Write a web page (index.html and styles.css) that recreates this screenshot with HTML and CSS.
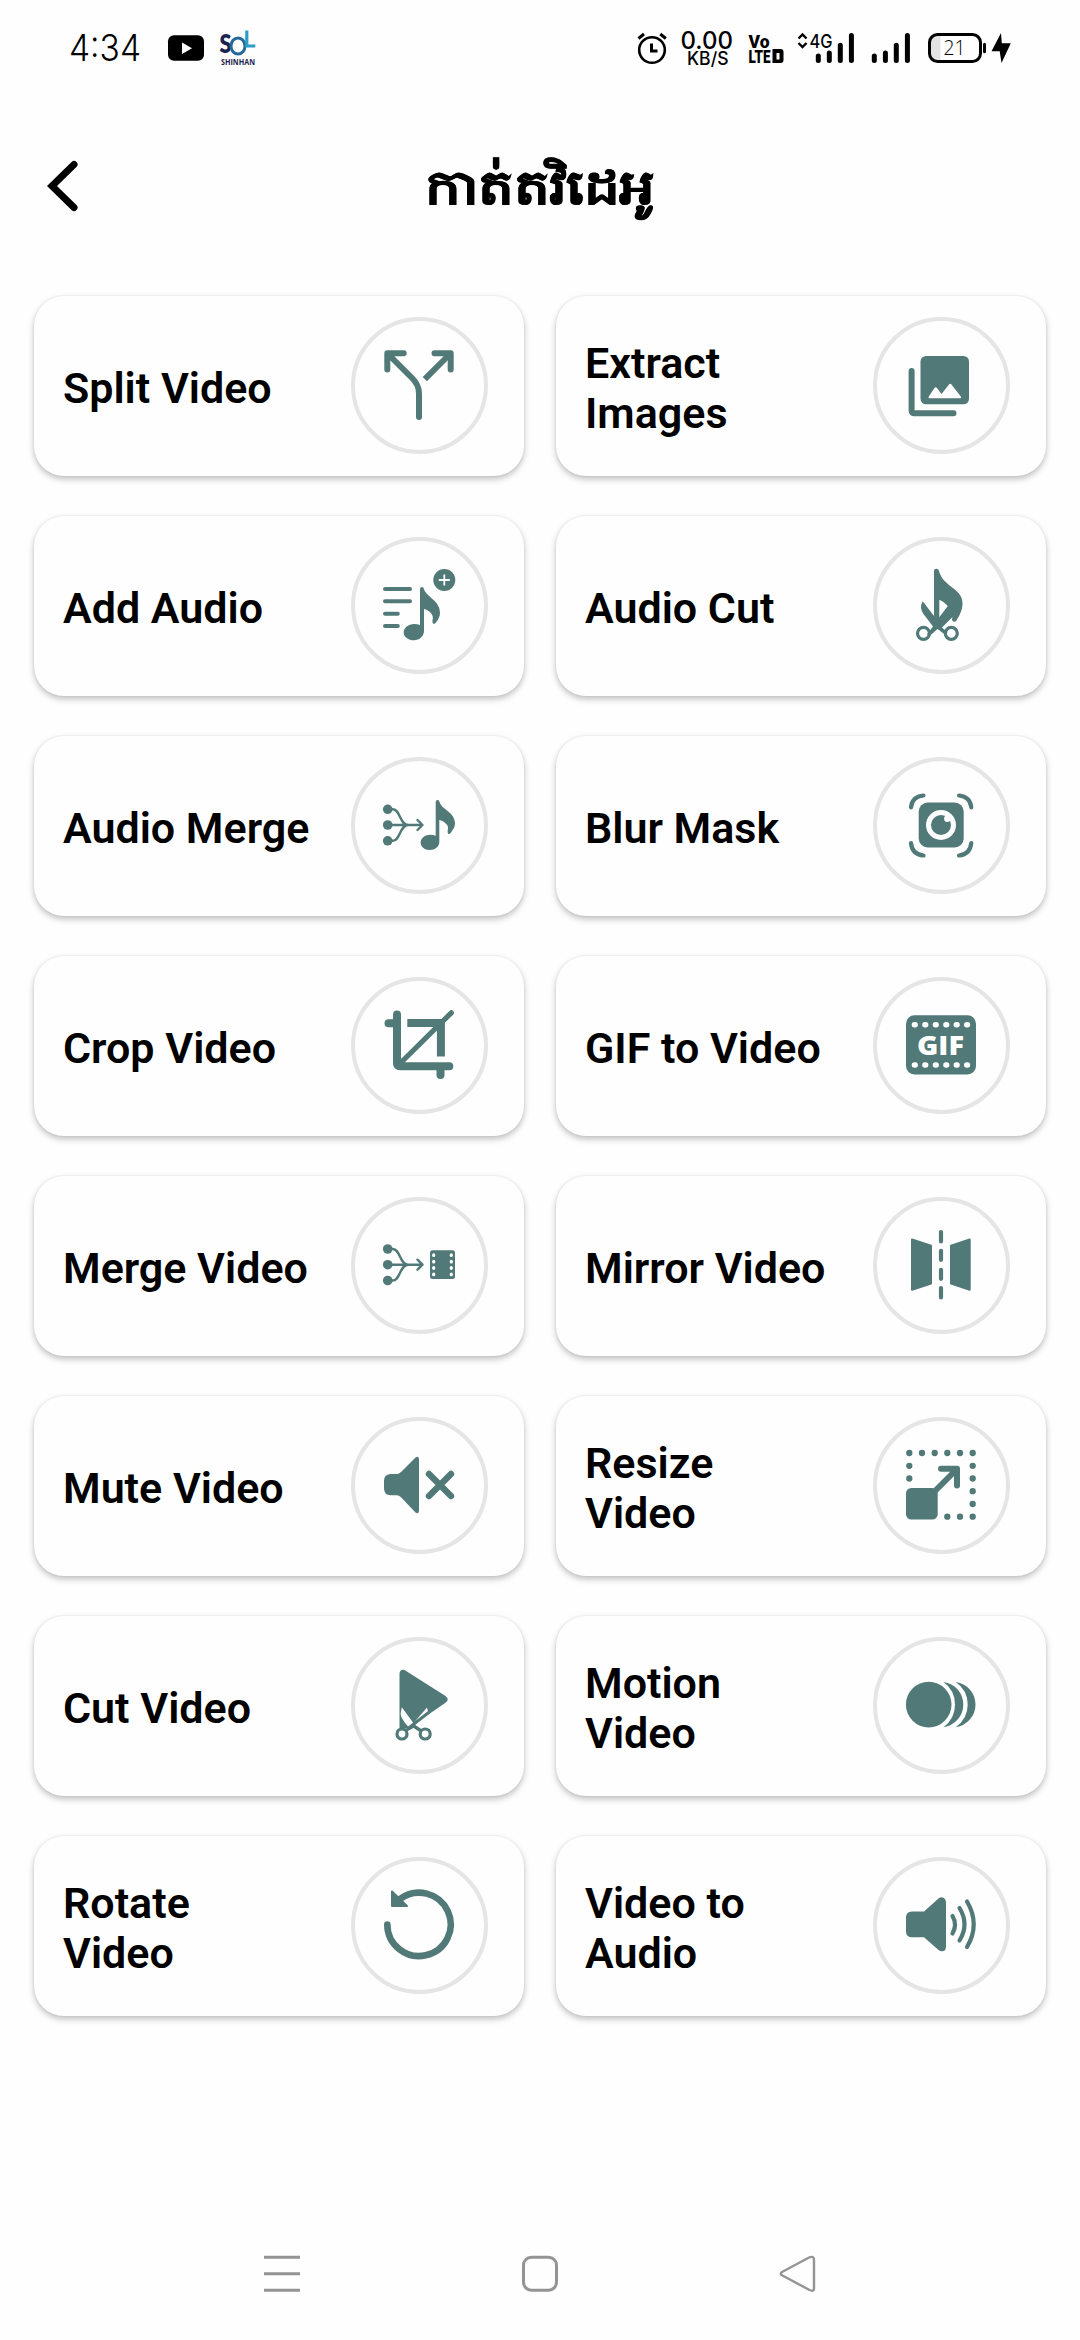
FILE: index.html
```html
<!DOCTYPE html>
<html>
<head>
<meta charset="utf-8">
<title>កាត់តវិដេអូ</title>
<link rel="stylesheet" href="styles.css">
</head>
<body>
<div class="screen">
  <div class="status">
    <svg width="300" height="96" viewBox="0 0 300 96">
      <text class="clock" x="69" y="61" textLength="72" lengthAdjust="spacingAndGlyphs">4:34</text>
      <rect x="168" y="35.3" width="36" height="25.4" rx="6"/>
      <path d="M182 42.5v11.5l10-5.7z" fill="#fff"/>
      <text class="sol" x="219.5" y="52.5" textLength="12" lengthAdjust="spacingAndGlyphs">S</text>
      <ellipse cx="238" cy="46" rx="7" ry="8" fill="none" stroke="#24699a" stroke-width="3"/>
      <path d="M246.8 30.500v15.500h8.500" fill="none" stroke="#2b9dc6" stroke-width="3.200"/>
      <text class="shinhan" x="221" y="65" textLength="34" lengthAdjust="spacingAndGlyphs">SHINHAN</text>
    </svg>
    <svg width="540" height="96" viewBox="540 0 540 96">
      <g fill="none" stroke="#000" stroke-width="2.600">
        <circle cx="652" cy="50" r="12.800"/>
        <path d="M651.500 43.500V51h6M638.500 38.500l5.500-4.500M665.800 38.500l-5.500-4.500" stroke-width="3"/>
      </g>
      <text class="t500" x="680.500" y="48.500" font-size="24" textLength="52.500" lengthAdjust="spacingAndGlyphs">0.00</text>
      <text class="t500" x="687" y="65" font-size="18" textLength="41.500" lengthAdjust="spacingAndGlyphs">KB/S</text>
      <text class="t900" x="748.500" y="47.500" font-size="18.500" textLength="21" lengthAdjust="spacingAndGlyphs">Vo</text>
      <text class="t900" x="748.500" y="63" font-size="19" textLength="22" lengthAdjust="spacingAndGlyphs">LTE</text>
      <path d="M772.500 49h8q3 0 3 3v8q0 3-3 3h-8zM776.500 53v6.500h3V53z" fill-rule="evenodd"/>
      <path d="M798.500 38.500l4-4 4 4M798.500 43l4 4 4-4" fill="none" stroke="#000" stroke-width="2.400"/>
      <text class="t500" x="809.500" y="47.800" font-size="19" textLength="23" lengthAdjust="spacingAndGlyphs">4G</text>
      <path d="M818.300 56v4.500M829.300 53v7.500M840.300 45.200v15.300M851.400 35.500v25M874.300 56v4.500M885.400 53v7.500M896.300 45.200v15.300M907.400 35.500v25" stroke="#000" stroke-width="5" stroke-linecap="round"/>
      <path d="M937 34.500h3.500v27H937q-7.500 0-7.500-7.500V42q0-7.500 7.500-7.500z" fill="#e3e3e3"/>
      <rect x="929.500" y="34.500" width="51" height="27" rx="8" fill="none" stroke="#000" stroke-width="3"/>
      <text class="t300" x="943.500" y="55" font-size="21" textLength="22" lengthAdjust="spacingAndGlyphs">21</text>
      <rect x="983" y="42.700" width="3" height="10.600" rx="1.500"/>
      <path d="M1001 33L991.500 51.300h8.200L1001.500 63l9.300-19.700h-9z"/>
    </svg>
  </div>

  <header class="bar">
    <svg class="back" width="40" height="60" viewBox="0 0 40 60"><path d="M31 8.500L9 30l22 21.500" fill="none" stroke="#000" stroke-width="7" stroke-linecap="round"/></svg>
    <h1 class="title">កាត់តវិដេអូ</h1>
  </header>

  <main class="grid">
    <div class="card"><span class="label">Split Video</span>
      <svg class="icon" viewBox="0 0 137 137"><circle class="ring" cx="68.500" cy="68.500" r="66.500"/>
        <g class="line" stroke-width="6"><path d="M52.700 36.300H36.300V52.500M36.500 36.500L61.500 61.500Q68 68 68 76.500V100M83.500 36.300H99.700V52.500"/><path d="M99.500 36.500L73.800 62.200" stroke-linecap="butt"/></g></svg></div>
    <div class="card"><span class="label">Extract<br>Images</span>
      <svg class="icon" viewBox="0 0 137 137"><circle class="ring" cx="68.500" cy="68.500" r="66.500"/>
        <rect x="47.500" y="39" width="48.500" height="48.300" rx="5.500"/><path class="line" d="M38.600 54V93.300q0 3 3 3H80.500" stroke-width="6"/>
        <path d="M56 81.300q-1-.6-.4-1.500l6-9q1.100-1.300 2.200 0l4.700 6.300 7.500-9.500q1.300-1.500 2.500 0l9.300 12q.8 1.100-.3 1.700z" fill="#fefefe"/></svg></div>

    <div class="card"><span class="label">Add Audio</span>
      <svg class="icon" viewBox="0 0 137 137"><circle class="ring" cx="68.500" cy="68.500" r="66.500"/>
        <path class="line" d="M34 52H59M34 64.300H59M34 76.700H46.800M34 89H46.800" stroke-width="4"/>
        <path d="M69 52q0-2 2-2 1.500 0 2 2c2 8 16 11 16 24 0 4-2.500 7.500-4.500 10q-2 2-3-.5v-2.500c2-5-3.500-10-8.500-11V94c0 5-4.500 9.300-10 9.300S52.700 100 52.700 95.500 57.500 87 63 87q3.500 0 6 1z"/>
        <circle cx="93.300" cy="43" r="11"/><path d="M93.300 37.500v11M87.800 43h11" stroke="#fefefe" stroke-width="1.800"/></svg></div>
    <div class="card"><span class="label">Audio Cut</span>
      <svg class="icon" viewBox="0 0 137 137"><circle class="ring" cx="68.500" cy="68.500" r="66.500"/>
        <path fill-rule="evenodd" d="M61 34q0-2.300 2.300-2.300t2.700 2.300c2 7 5.500 10 10 14 8 6 13.500 10 13.500 18.500 0 6.500-3 12-6 17q-2 2.500-4.300 0-.5-1.500.3-3.500L69 90.500l5.500 5-2 2.500L64.500 92 56 99.500l-2-2.500 6-7.500-9.500-12.500Q46 71 49.700 64.300L61 79zM66.300 62.700v17.500L74.800 69q-3.500-4.500-8.500-6.300z"/>
        <g class="line" stroke-width="3.200"><circle cx="50.500" cy="96.300" r="6"/><circle cx="78.300" cy="96.300" r="6"/></g></svg></div>

    <div class="card"><span class="label">Audio Merge</span>
      <svg class="icon" viewBox="0 0 137 137"><circle class="ring" cx="68.500" cy="68.500" r="66.500"/>
        <g><circle cx="36.700" cy="52.300" r="4.800"/><circle cx="36.700" cy="68" r="4.800"/><circle cx="36.700" cy="83.800" r="4.800"/><path class="line" d="M37 52.300h5c7 0 7 15.700 15 15.700M37 83.800h5c7 0 7-15.800 15-15.800M37 68H71M66.500 63l5 5-5 5" stroke-width="2.400"/></g>
        <path d="M84.700 45q0-2 1.800-2t2 2c2 7.500 15.500 10 15.500 21.500 0 4-2.300 6.500-4 9q-2.500 3-3.300 0v-2.500c2-4.500-3.500-9-8.400-10V85c0 4.500-4.300 8-9.600 8s-9.100-3.300-9.100-7.500 4.600-7.700 9.600-7.700q3 0 5.500 1z"/></svg></div>
    <div class="card"><span class="label">Blur Mask</span>
      <svg class="icon" viewBox="0 0 137 137"><circle class="ring" cx="68.500" cy="68.500" r="66.500"/>
        <path class="line" d="M38 50.300Q39 39.500 50.500 38.500M86 38.500Q97 39.500 98.300 50.300M38 86Q39 97.500 50.500 98.500M86 98.500Q97 97.500 98.300 86" stroke-width="4.200"/>
        <rect x="45.700" y="45.500" width="45" height="45" rx="9"/><circle cx="68" cy="68" r="12.500" fill="none" stroke="#fefefe" stroke-width="5"/><circle cx="74.300" cy="61.800" r="3.200" fill="#fefefe"/></svg></div>

    <div class="card"><span class="label">Crop Video</span>
      <svg class="icon" viewBox="0 0 137 137"><circle class="ring" cx="68.500" cy="68.500" r="66.500"/>
        <g class="line" stroke-width="8"><path d="M46 37.500V86q0 3.200 3.200 3.200H98.300M37.500 46.300H46M89.500 89.200V98"/><path d="M56.300 45.900H89.900V79.600" stroke-linecap="butt" stroke-linejoin="miter"/><path d="M48 87.500L100.300 35.800" stroke-width="5.200"/></g></svg></div>
    <div class="card"><span class="label">GIF to Video</span>
      <svg class="icon" viewBox="0 0 137 137"><circle class="ring" cx="68.500" cy="68.500" r="66.500"/>
        <rect x="33" y="38.300" width="70" height="59.300" rx="8.500"/>
        <path d="M41.400 47.800h.8M51.900 47.800h.8M62.400 47.800h.8M72.900 47.800h.8M83.300 47.800h.8M93.700 47.800h.8M41.400 88h.8M51.900 88h.8M62.400 88h.8M72.900 88h.8M83.300 88h.8M93.700 88h.8" stroke="#fefefe" stroke-width="5.400" stroke-linecap="round"/>
        <text class="gif" x="44" y="77.500" textLength="47" lengthAdjust="spacingAndGlyphs">GIF</text></svg></div>

    <div class="card"><span class="label">Merge Video</span>
      <svg class="icon" viewBox="0 0 137 137"><circle class="ring" cx="68.500" cy="68.500" r="66.500"/>
        <g><circle cx="36.700" cy="52" r="4.800"/><circle cx="36.700" cy="67.700" r="4.800"/><circle cx="36.700" cy="83.500" r="4.800"/><path class="line" d="M37 52h5c7 0 7 15.700 15 15.700M37 83.500h5c7 0 7-15.800 15-15.800M37 67.700H71M66.500 62.700l5 5-5 5" stroke-width="2.400"/></g>
        <rect x="79" y="53.200" width="25" height="28.700" rx="2.500"/><path d="M82.700 57.900v.6M82.700 64.300v.6M82.700 70.700v.6M82.700 77.100v.6M100.300 57.900v.6M100.300 64.300v.6M100.300 70.700v.6M100.300 77.100v.6" stroke="#fefefe" stroke-width="3.200" stroke-linecap="round"/></svg></div>
    <div class="card"><span class="label">Mirror Video</span>
      <svg class="icon" viewBox="0 0 137 137"><circle class="ring" cx="68.500" cy="68.500" r="66.500"/>
        <path class="solid" d="M39 42.500L58 48.800V86.500L39 92.800zM96.700 42.500L78 48.800V86.500L96.700 92.800z"/>
        <path class="line" d="M68 35v9.500M68 53.800v9M68 72.800v9M68 91v9.500" stroke-width="4.200"/></svg></div>

    <div class="card"><span class="label">Mute Video</span>
      <svg class="icon" viewBox="0 0 137 137"><circle class="ring" cx="68.500" cy="68.500" r="66.500"/>
        <path d="M33 64q0-7 7-7h6q2 0 4-2L64.500 40.500Q68 38.500 68 42.500V93.500Q68 97.500 64.500 95.500L50 80.300q-2-2-4-2h-6q-7 0-7-7z"/>
        <path class="line" d="M78 57L100 79M100 57L78 79" stroke-width="6.400"/></svg></div>
    <div class="card"><span class="label">Resize<br>Video</span>
      <svg class="icon" viewBox="0 0 137 137"><circle class="ring" cx="68.500" cy="68.500" r="66.500"/>
        <path class="line" d="M36.300 36h0M49 36h0M61.700 36h0M74.300 36h0M87 36h0M99.700 36h0M36.300 48.800h0M36.300 61.500h0M99.700 48.800h0M99.700 61.500h0M99.700 74.200h0M99.700 87h0M99.700 99.700h0M87 99.700h0M74.300 99.700h0" stroke-width="6.300"/>
        <rect x="33" y="71" width="31.700" height="31.500" rx="5.300"/><path class="line" d="M62 74L83.500 52.500M68 51.800H84V68.500" stroke-width="6"/></svg></div>

    <div class="card"><span class="label">Cut Video</span>
      <svg class="icon" viewBox="0 0 137 137"><circle class="ring" cx="68.500" cy="68.500" r="66.500"/>
        <path d="M48.500 36.500q.5-4.500 5-3.500L94.500 59q4.500 3.300 0 6.700L66.500 85 60 92 48.500 91z"/>
        <path d="M50.800 70.300L62 85.500 60.500 90.500 57.500 90Q49 80.500 49.700 76zM76 70.500L77.700 77.500 67 87.500 62.800 85.700z" fill="#fefefe"/>
        <path d="M77.700 75.500L57 91.500M61 88L69 93.500" fill="none" stroke="#517977" stroke-width="3"/>
        <g class="line" stroke-width="3.200"><circle cx="51" cy="97" r="5"/><circle cx="74.200" cy="97" r="5"/></g><path class="line" d="M55 93.500L63 89 70 93.500" stroke-width="2.800"/></svg></div>
    <div class="card"><span class="label">Motion<br>Video</span>
      <svg class="icon" viewBox="0 0 137 137"><circle class="ring" cx="68.500" cy="68.500" r="66.500"/>
        <circle cx="55.700" cy="67.600" r="22.800"/><path d="M70.500 45A22.800 22.800 0 0 1 70.500 90.200Q82 82 82 67.600T70.500 45zM82.700 45A22.800 22.800 0 0 1 82.700 90.200Q94.700 82 94.700 67.600T82.700 45z"/></svg></div>

    <div class="card"><span class="label">Rotate<br>Video</span>
      <svg class="icon" viewBox="0 0 137 137"><circle class="ring" cx="68.500" cy="68.500" r="66.500"/>
        <path class="line" d="M36.300 67.500A31.700 31.700 0 1 0 49 42" stroke-width="6.600"/><path class="solid" d="M41 34.500L56 49H41z"/></svg></div>
    <div class="card"><span class="label">Video to<br>Audio</span>
      <svg class="icon" viewBox="0 0 137 137"><circle class="ring" cx="68.500" cy="68.500" r="66.500"/>
        <path d="M33 60.500q0-6 6-6H51L65.500 41.500Q68 39.500 70.500 40.700 73 42 73 45V90Q73 93 70.500 94 68 95 65.500 93L51 80.300H39q-6 0-6-6z"/>
        <path class="line" d="M79.500 59Q84.500 67.500 79.500 76.500M86.500 51Q96.500 67.500 86.500 83.500M94 44.500Q107.500 67.500 94 90" stroke-width="4.200"/></svg></div>
  </main>

  <nav class="nav">
    <svg width="40" height="40" viewBox="0 0 40 40"><path d="M2 3.300H38M2 19.700H38M2 36.300H38"/></svg>
    <svg width="40" height="40" viewBox="0 0 40 40"><rect x="3.500" y="3.200" width="33" height="33" rx="8"/></svg>
    <svg width="40" height="40" viewBox="0 0 40 40"><path d="M4 18L31 3.500Q36 1.500 36 6V34.500Q36 38 31.500 36L4.500 21.500Q1.500 19.700 4 18z" stroke-width="2.400"/></svg>
  </nav>
</div>
</body>
</html>
```
FILE: styles.css
```css
* { box-sizing: border-box; }
body { margin: 0; background: #fefefe; color: #000; font-family: Roboto, sans-serif; }
.screen { width: 1080px; height: 2340px; display: flex; flex-direction: column; overflow: hidden; }
.status { height: 96px; display: flex; justify-content: space-between; }
.clock { font: 300 37px Inter, sans-serif; }
.sol { font: 800 26px Lato, sans-serif; fill: #1b2350; }
.shinhan { font: 700 8.500px "Open Sans", sans-serif; fill: #1b2350; }
.t300 { font-family: "Open Sans", sans-serif; font-weight: 300; }
.t500 { font-family: Inter, sans-serif; font-weight: 500; }
.t900 { font-family: Roboto, sans-serif; font-weight: 900; }

.bar { height: 180px; display: grid; grid-template-columns: 160px 1fr 160px; align-items: center; }
.back { margin-left: 43px; }
.title { margin: 0; padding-top: 4px; font-size: 48px; font-weight: 700; line-height: 60px; text-align: center; transform: scaleX(1.175); -webkit-text-stroke: .5px #000; }

.grid { flex: 1; padding: 20px 34px 0; display: grid; grid-template-columns: 490px 490px; column-gap: 32px; grid-auto-rows: 180px; row-gap: 40px; align-content: start; }
.card { display: flex; align-items: center; justify-content: space-between; padding: 0 36px 1px 29px; border-radius: 30px; background: #fefefe; box-shadow: 0 3px 6px rgba(0, 0, 0, .25), 0 0 2px rgba(0, 0, 0, .08); }
.label { font-size: 43px; line-height: 50px; font-weight: 600; white-space: nowrap; padding-top: 5px; }
.icon { width: 137px; height: 137px; flex: none; fill: #517977; }
.ring { fill: none; stroke: #e5e5e5; stroke-width: 4; }
.line { fill: none; stroke: #517977; stroke-linecap: round; stroke-linejoin: round; }
.solid { stroke: #517977; stroke-width: 2; stroke-linejoin: round; }
.gif { font: 800 27px "Open Sans", sans-serif; fill: #fefefe; }

.nav { height: 88px; display: flex; justify-content: center; gap: 218px; }
.nav svg { fill: none; stroke: #949494; stroke-width: 3; margin-top: 2px; }
```
